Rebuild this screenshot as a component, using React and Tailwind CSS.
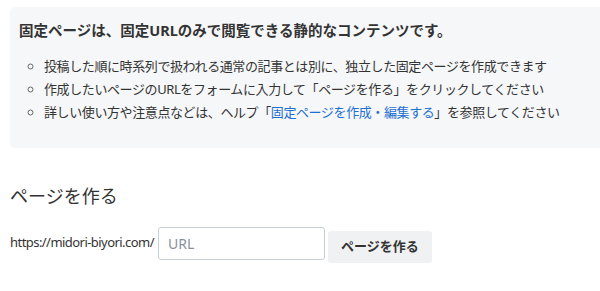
import React from "react";

export default function App() {
  const font = { fontFamily: '"Noto Sans", "Noto Sans CJK JP", sans-serif' };
  return (
    <div className="w-[600px] h-[291px] bg-white text-[#333] overflow-hidden" style={font}>
      <div className="pl-[10px] pt-[7px]">
        <div className="bg-[#f6f7f9] rounded-l-[5px] h-[141px] pl-[9px] pt-[12px]">
          <p className="text-[14.5px] font-bold leading-[22px] text-[#333]">
            固定ページは、固定URLのみで閲覧できる静的なコンテンツです。
          </p>
          <ul className="list-[circle] pl-[25px] mt-[14px] text-[13px] leading-[23px] text-[#333] tracking-[-0.4px] marker:text-[#666]">
            <li>投稿した順に時系列で扱われる通常の記事とは別に、独立した固定ページを作成できます</li>
            <li>作成したいページのURLをフォームに入力して「ページを作る」をクリックしてください</li>
            <li>
              詳しい使い方や注意点などは、ヘルプ「<span className="text-[#1e6fd0]">固定ページを作成・編集する</span>」を参照してください
            </li>
          </ul>
        </div>
      </div>
      <div className="px-[10px]">
        <h2 className="mt-[36px] text-[18px] leading-[24px] font-normal text-[#333]">ページを作る</h2>
        <div className="mt-[15px] flex items-center">
          <span className="text-[13px] text-[#333] tracking-[-0.55px]">https://midori-biyori.com/</span>
          <input
            className="ml-[4px] w-[167px] h-[33px] border border-[#c4cfd6] rounded-[3px] px-[9px] text-[14px] placeholder:text-[#8a9099] outline-none"
            placeholder="URL"
          />
          <button className="ml-[3px] mt-[8px] w-[104px] h-[32px] bg-[#f0f1f3] rounded-[3px] text-[13px] font-bold text-[#333]">
            ページを作る
          </button>
        </div>
      </div>
    </div>
  );
}
